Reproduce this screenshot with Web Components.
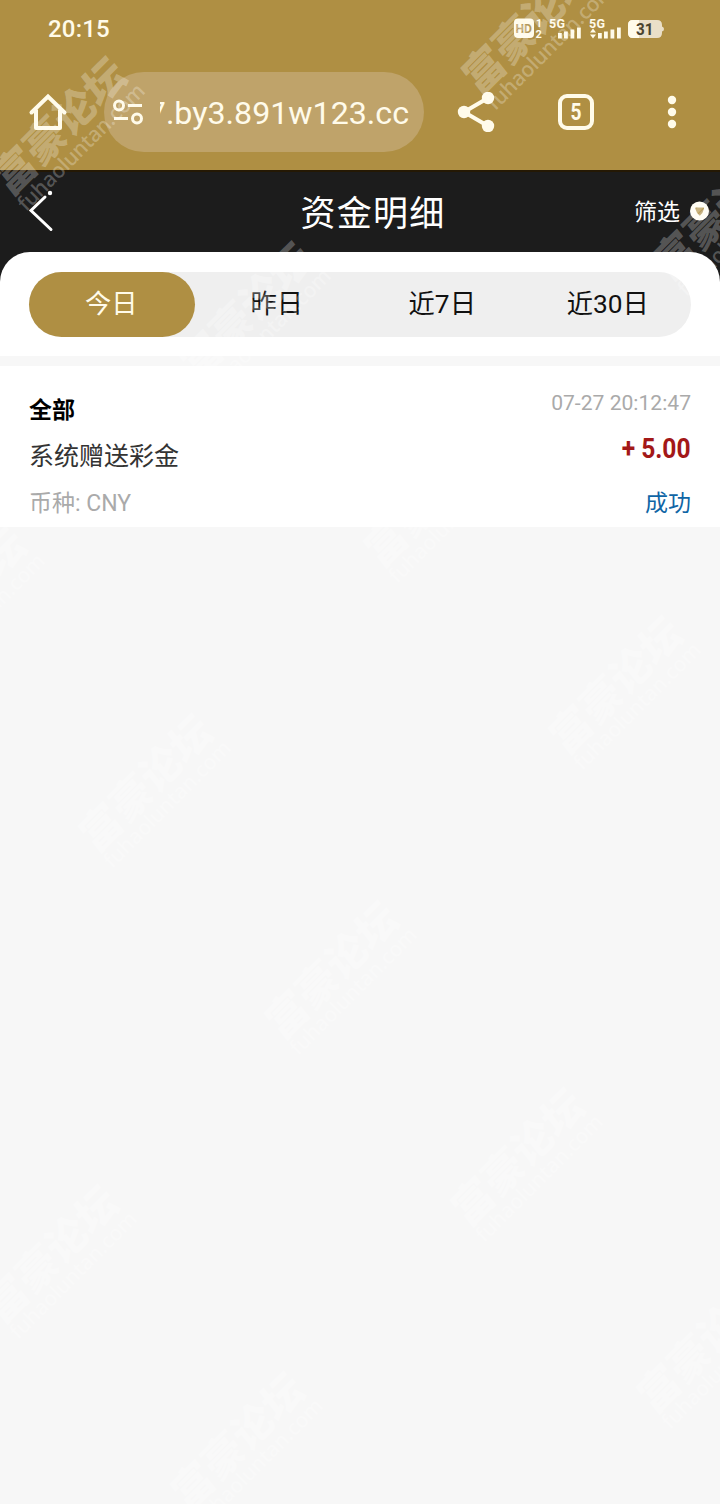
<!DOCTYPE html>
<html lang="zh-CN">
<head>
<meta charset="utf-8">
<title>资金明细</title>
<style>
html,body{margin:0;padding:0}
body{width:720px;height:1504px;overflow:hidden;background:#f7f7f7;font-family:Roboto,"Noto Sans CJK SC",sans-serif}
</style>
</head>
<body>
<fund-page></fund-page>
<script>
function define(name, html){
  customElements.define(name, class extends HTMLElement{
    constructor(){
      super();
      const t=document.createElement('template');
      t.innerHTML=html;
      this.attachShadow({mode:'open'}).append(t.content.cloneNode(true));
    }
  });
}

define('status-bar',`<style>
:host{display:flex;height:56px;box-sizing:border-box;padding:2px 56px 0 48px;align-items:center;justify-content:space-between;color:#fffbea}
.time{font-size:24px;font-weight:500;letter-spacing:.2px;line-height:28px}
svg{display:block;overflow:visible}
</style><span class="time">20:15</span>
<svg width="152" height="24" viewBox="0 0 152 24" fill="#fffbea" font-family="Roboto,sans-serif" font-weight="700">
<rect x="2" y="1.500" width="20" height="19.500" rx="4"/>
<text x="3.500" y="15.700" font-size="12" fill="#b4975a" textLength="16.500" lengthAdjust="spacingAndGlyphs">HD</text>
<text x="24" y="10" font-size="10.500">1</text><text x="23.500" y="21" font-size="11">2</text>
<text x="37" y="10.500" font-size="12.500" textLength="16">5G</text>
<path d="M46 16h3.800v5.500H46zM52 14.500h3.800v7H52zM58.500 12.500h3.800v9h-3.800zM65 10.500h3.800v11H65z"/>
<text x="77" y="10.500" font-size="12.500" textLength="16">5G</text>
<path d="M78 15.500l3-4 3 4zM78 17.500h6l-3 4zM86 16h3.800v5.500H86zM92 14.500h3.800v7H92zM98.500 12.500h3.800v9h-3.800zM105 10.500h3.800v11H105z"/>
<path d="M121 3h24q5 0 5 5v1.500q2 .5 2 2.500t-2 2.500V16q0 5-5 5h-24q-5 0-5-5V8q0-5 5-5z" fill="#eadfc8"/>
<path d="M121 3h6v18h-6q-5 0-5-5V8q0-5 5-5z"/>
<text x="124" y="17.700" font-size="16" fill="#4a432f" textLength="17.500" lengthAdjust="spacingAndGlyphs">31</text>
</svg>`);

define('address-pill',`<style>
:host{display:flex;box-sizing:border-box;width:320px;height:80px;border-radius:40px;background:#bfa36a;align-items:center;padding-left:8px;color:#fffbea}
svg{display:block;flex:none}
.clip{margin-left:16px;width:249px;height:44px;overflow:hidden;display:flex;justify-content:flex-end;align-items:center;white-space:nowrap;font-size:32.200px;line-height:44px;padding-top:1px}
span{flex:none}
</style><svg width="32" height="32" viewBox="0 0 32 32" fill="none" stroke="#fffbea" stroke-width="3"><circle cx="7" cy="9.500" r="4.500"/><path d="M16 9.500h14M2 22.500h14"/><circle cx="25" cy="22.500" r="4.500"/></svg>
<div class="clip"><span><slot></slot></span></div>`);

define('browser-bar',`<style>
:host{display:flex;height:114px;box-sizing:border-box;align-items:flex-start;padding:16px 0 0 28px}
svg{display:block;flex:none;margin-top:20px}
address-pill{margin-left:36px}
.share{margin-left:32px}.tabs{margin-left:60px}.more{margin-left:64px}
</style>
<svg width="40" height="40" viewBox="0 0 40 40" fill="none" stroke="#fffbea" stroke-width="4"><path d="M3.500 20.500L20 4.500l16.500 16" stroke-linecap="round"/><path d="M8 17.500v18.500h24V17.500" stroke-linejoin="round"/></svg>
<address-pill>7.by3.891w123.cc</address-pill>
<svg class="share" width="40" height="40" viewBox="0 0 40 40" fill="#fffbea"><path d="M32 6L8 20l24 14" fill="none" stroke="#fffbea" stroke-width="4"/><circle cx="32" cy="6" r="6.200"/><circle cx="8" cy="20" r="6.200"/><circle cx="32" cy="34" r="6.200"/></svg>
<svg class="tabs" width="40" height="40" viewBox="0 0 40 40"><rect x="4" y="4" width="32" height="32" rx="7" fill="none" stroke="#fffbea" stroke-width="4"/><text x="20" y="28" font-family="Roboto,sans-serif" font-size="23" font-weight="700" text-anchor="middle" fill="#fffbea" textLength="11" lengthAdjust="spacingAndGlyphs">5</text></svg>
<svg class="more" width="24" height="40" viewBox="0 0 24 40" fill="#fffbea"><circle cx="12" cy="8" r="4.200"/><circle cx="12" cy="20" r="4.200"/><circle cx="12" cy="32" r="4.200"/></svg>`);

define('page-header',`<style>
:host{display:grid;grid-template-columns:200px 1fr 200px;height:112px;box-sizing:border-box;padding-bottom:30px;align-items:center;background:#1c1c1c;color:#fff;border-top:2px solid #241804}
.back{margin:-3px 0 0 28px;display:block}
h1{margin:0;font-size:35px;font-weight:400;letter-spacing:1.200px;text-align:center;line-height:50px;padding:5px 0 0 26px}
.filter{display:flex;align-items:center;justify-content:flex-end;padding:2px 11px 0 0;font-size:23px;line-height:32px;gap:10px}
.filter svg{margin-top:-5px}
</style>
<svg class="back" width="26" height="44" viewBox="0 0 26 44" fill="none" stroke="#fff" stroke-width="3"><path d="M17 8L3 21.500l20 19" stroke-linecap="round"/><circle cx="22" cy="4" r="2.200" fill="#fff" stroke="none"/></svg>
<h1>资金明细</h1>
<div class="filter"><span>筛选</span><svg width="19" height="20" viewBox="0 0 19 20"><circle cx="9.500" cy="10" r="9.500" fill="#fffdf3"/><path d="M6 6.500h7.500q.8 0 .5 1.300-.8 4-4.200 7-3.600-3-4.500-7-.2-1.300.7-1.300z" fill="#b69a58"/></svg></div>`);

define('range-tab',`<style>
:host{display:flex;flex:1;height:65px;align-items:center;justify-content:center;border-radius:33px;font-size:26.300px;color:#111;box-sizing:border-box;padding:0 1px 6px 0;white-space:nowrap}
:host([active]){background:#af8f43;color:#fffbea}
</style><slot></slot>`);

define('range-tabs',`<style>
:host{display:block;background:#fff;margin-top:-30px;border-radius:30px 30px 0 0;padding:20px 29px 19px;position:relative}
.track{display:flex;background:#efefef;border-radius:33px}
</style><div class="track"><range-tab active>今日</range-tab><range-tab>昨日</range-tab><range-tab>近7日</range-tab><range-tab>近30日</range-tab></div>`);

define('fund-record',`<style>
:host{display:flex;justify-content:space-between;height:161px;margin-top:10px;background:#fff;padding:0 29px;box-sizing:border-box}
.l,.r{display:flex;flex-direction:column}
.r{align-items:flex-end}
.l{padding-top:28px}.r{padding-top:22px}
</style><div class="l"><slot name="left"></slot></div><div class="r"><slot name="right"></slot></div>`);

define('record-line',`<style>
:host{display:block;white-space:nowrap;color:#aaa}
:host([kind=type]){font-size:23px;font-weight:700;color:#000;line-height:34px}
:host([kind=name]){font-size:25px;color:#333;line-height:36px;margin-top:11px}
:host([kind=coin]){font-size:23px;line-height:34px;margin-top:12px}
:host([kind=date]){font-size:21.100px;line-height:30px}
:host([kind=amount]){font-size:27.300px;font-weight:700;color:#a31818;line-height:36px;margin-top:13px;transform:scaleX(.9);transform-origin:right}
:host([kind=state]){font-size:23px;color:#0f65a5;line-height:34px;margin-top:20px}
</style><slot></slot>`);

define('water-mark',`<style>
:host{position:absolute;width:176px;height:66px;margin:-33px 0 0 -88px;transform:rotate(-45deg);color:rgba(255,255,255,.27);white-space:nowrap}
.n{font:900 42px/42px "Noto Sans CJK SC",sans-serif;padding-left:2px;transform:skewX(-7deg)}
.u{font:500 21px/22px "Noto Sans","Open Sans",sans-serif;letter-spacing:-.200px;padding-left:1px}
</style><div class="n">富豪论坛</div><div class="u">fuhaoluntan.com</div>`);

define('fund-page',`<style>
:host{display:block;position:relative;width:720px;height:1504px;overflow:hidden;background:#f7f7f7}
.top{background:#af8f43;color:#fffbea;height:170px}
.marks{position:absolute;inset:0;overflow:hidden;pointer-events:none}
</style>
<div class="top"><status-bar></status-bar><browser-bar></browser-bar></div>
<page-header></page-header>
<range-tabs></range-tabs>
<fund-record>
<record-line slot="left" kind="type">全部</record-line><record-line slot="left" kind="name">系统赠送彩金</record-line><record-line slot="left" kind="coin">币种: CNY</record-line>
<record-line slot="right" kind="date">07-27 20:12:47</record-line><record-line slot="right" kind="amount">+ 5.00</record-line><record-line slot="right" kind="state">成功</record-line>
</fund-record>
<div class="marks">
${[[68,131],[537,30],[254,316],[728,216],[439,503],[-32,601],[624,690],[154,788],[340,975],[526,1162],[60,1259],[712,1349],[246,1446]].map(([x,y])=>`<water-mark style="left:${x}px;top:${y}px"></water-mark>`).join('')}
</div>`);
</script>
</body>
</html>
